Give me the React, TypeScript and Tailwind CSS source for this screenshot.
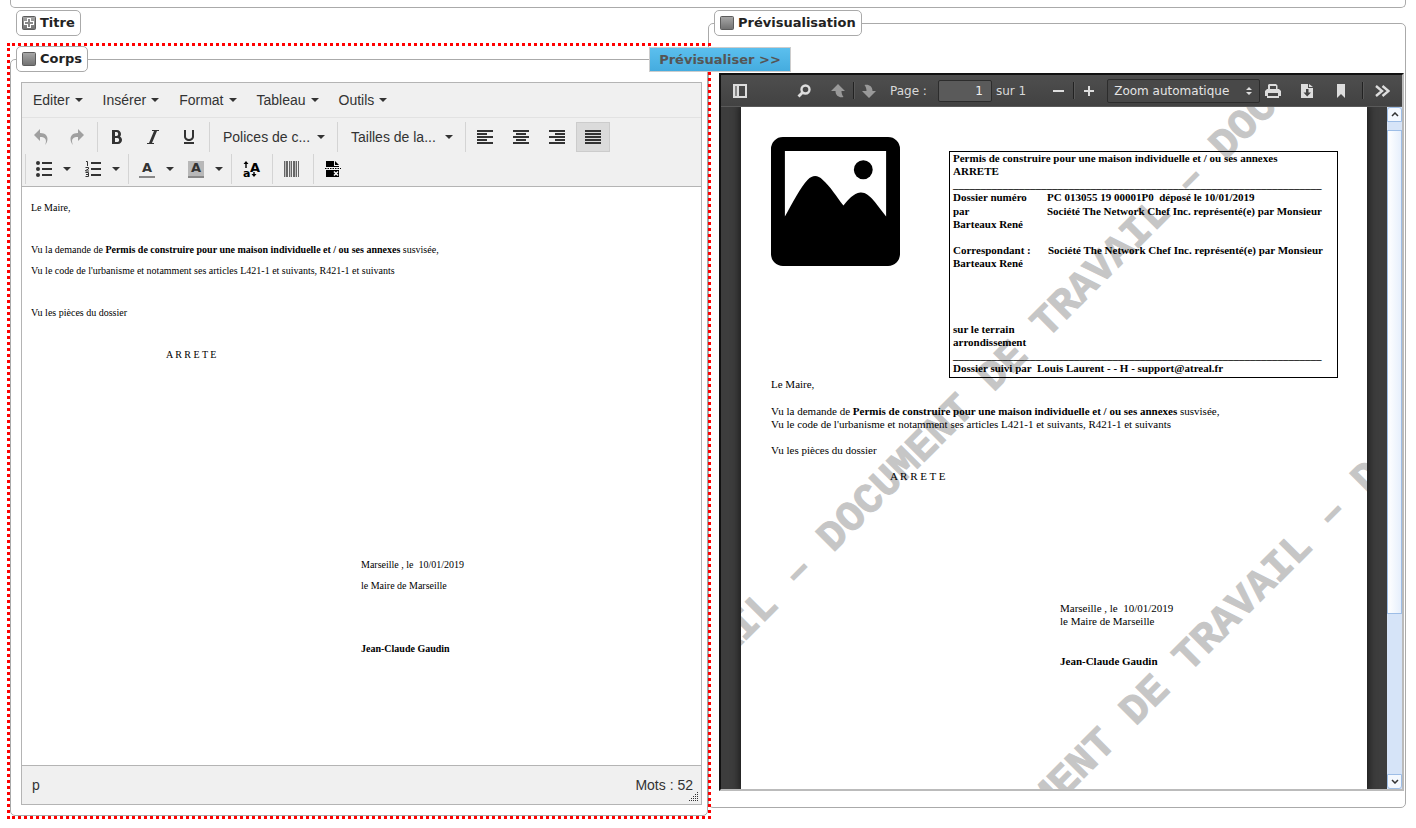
import type { ReactNode } from "react";
import {
  ImBold,
  ImItalic,
  ImUnderline,
  ImUndo2,
  ImRedo2,
  ImParagraphLeft,
  ImParagraphCenter,
  ImParagraphRight,
  ImParagraphJustify,
} from "react-icons/im";

function Toggle({ open, children }: { open: boolean; children: ReactNode }) {
  return (
    <legend className="-ml-[5px] rounded-[5px] border border-[#aaa] bg-white px-[5px]">
      <button type="button" className="flex h-[24px] items-center gap-[4px] font-['DejaVu_Sans',sans-serif] text-[13px] font-bold text-[#222]">
        <svg width="14" height="14" viewBox="0 0 14 14" aria-hidden="true">
          <defs>
            <linearGradient id="tg" x1="0" y1="0" x2="0" y2="1">
              <stop offset="0" stopColor="#a8a8a8" />
              <stop offset="1" stopColor="#707070" />
            </linearGradient>
          </defs>
          <rect x=".5" y=".5" width="13" height="13" rx="1" fill="url(#tg)" stroke="#5c5c5c" />
          {!open && (
            <>
              <path d="M5 2h4v3h3v4H9v3H5V9H2V5h3z" fill="#fff" />
              <path d="M6 3h2v3h3v2H8v3H6V8H3V6h3z" fill="#888" />
            </>
          )}
        </svg>
        {children}
      </button>
    </legend>
  );
}

function Caret() {
  return (
    <svg width="8" height="4" viewBox="0 0 8 4" aria-hidden="true">
      <path d="M0 0h8L4 4z" fill="#333" />
    </svg>
  );
}

function ToolButton({ label, active, children }: { label: string; active?: boolean; children: ReactNode }) {
  return (
    <button
      type="button"
      aria-label={label}
      className={
        active
          ? "flex h-[30px] w-[34px] items-center justify-center border border-[#ccc] bg-[#dbdbdb]"
          : "flex h-[30px] w-[34px] items-center justify-center"
      }
    >
      {children}
    </button>
  );
}

function SplitButton({ label, children }: { label: string; children: ReactNode }) {
  return (
    <button type="button" aria-label={label} className="flex h-[30px] w-[48px] items-center gap-[11px] pl-[8px]">
      {children}
      <Caret />
    </button>
  );
}

const groupStyles = {
  first: "flex gap-[2px]",
  normal: "ml-[3px] flex gap-[2px] border-l border-[#d4d4d4] pl-[2px]",
  split: "ml-[3px] flex gap-px border-l border-[#d4d4d4] pl-[2px]",
  single: "ml-[3px] flex border-l border-[#d4d4d4] pr-px pl-[2px]",
};

function Group({ kind = "normal", children }: { kind?: keyof typeof groupStyles; children: ReactNode }) {
  return <div className={groupStyles[kind]}>{children}</div>;
}

function ListBox({ children }: { children: ReactNode }) {
  return (
    <button type="button" className="flex h-[30px] w-[122px] items-center justify-between pr-[9px] pl-[11px] whitespace-nowrap">
      {children}
      <Caret />
    </button>
  );
}

function Bullets() {
  return (
    <svg width="16" height="16" viewBox="0 0 16 16" fill="#333" aria-hidden="true">
      <circle cx="2" cy="2" r="2" />
      <circle cx="2" cy="8" r="2" />
      <circle cx="2" cy="14" r="2" />
      <path d="M6 1h10v2H6zM6 7h10v2H6zM6 13h10v2H6z" />
    </svg>
  );
}

function Numbers() {
  return (
    <svg width="16" height="16" viewBox="0 0 16 16" aria-hidden="true">
      <path d="M6 1h10v2H6zM6 7h10v2H6zM6 13h10v2H6z" fill="#333" />
      <path d="M1 .5h1.500V5M.5 6.500h3v1.500l-3 1.500v.5h3.500M.5 11.500h3v4h-3M1 13.500h2" stroke="#333" fill="none" />
    </svg>
  );
}

function TextCase() {
  return (
    <svg width="18" height="18" viewBox="0 0 18 18" aria-hidden="true" className="overflow-visible">
      <text x="8" y="12" fontSize="13" fontWeight="bold" fontFamily="DejaVu Sans">A</text>
      <text x="1" y="17" fontSize="11" fontWeight="bold" fontFamily="DejaVu Sans">a</text>
      <path d="M1.500 4L4 1l2.500 3H4.700v4H3.300V4zM9.500 14l2.500 3 2.500-3h-1.800v-2h-1.400v2z" />
    </svg>
  );
}

function Barcode() {
  return (
    <svg width="16" height="16" viewBox="0 0 16 16" fill="#666" aria-hidden="true">
      <path d="M0 0h1v16H0zM2 0h2v16H2zM5 0h1v16H5zM7 0h1v16H7zM9 0h2v16H9zM12 0h1v16h-1zM14 0h1v16h-1z" />
      <path d="M1 0h1v16H1zM6 0h1v16H6zM11 0h1v16h-1z" fill="#bbb" />
    </svg>
  );
}

function PageBreak() {
  return (
    <svg width="16" height="16" viewBox="0 0 16 16" aria-hidden="true">
      <path d="M1 0h8v5h5v1H1zM10 0l4 4h-4zM1 9h13v7H1z" />
      <path d="M0 7.500h16" stroke="#000" strokeDasharray="1.500 1" />
      <path d="M9 10.500l4 4M13 10.500l-4 4" stroke="#fff" strokeWidth="1.500" />
    </svg>
  );
}

function Editor() {
  return (
    <div className="border border-[#b4b4b4] bg-[#f0f0f0] font-['Liberation_Sans',sans-serif] text-[14px] text-[#333]">
      <div className="flex h-[35px] items-center border-b border-[#e2e2e2] pl-[1px]">
        {["Editer", "Insérer", "Format", "Tableau", "Outils"].map((m) => (
          <button key={m} type="button" className="flex items-center gap-[5px] px-[10px] leading-5">
            {m}
            <Caret />
          </button>
        ))}
      </div>
      <div className="flex h-[69px] flex-col gap-[2px] border-b border-[#b4b4b4] py-[4px]">
        <div className="flex pl-[2px]">
          <Group kind="first">
            <ToolButton label="Annuler"><ImUndo2 size={16} color="#a0a0a0" /></ToolButton>
            <ToolButton label="Rétablir"><ImRedo2 size={16} color="#a0a0a0" /></ToolButton>
          </Group>
          <Group>
            <ToolButton label="Gras"><ImBold size={16} /></ToolButton>
            <ToolButton label="Italique"><ImItalic size={16} /></ToolButton>
            <ToolButton label="Souligné"><ImUnderline size={16} /></ToolButton>
          </Group>
          <Group><ListBox>Polices de c...</ListBox></Group>
          <Group><ListBox>Tailles de la...</ListBox></Group>
          <Group>
            <ToolButton label="Aligner à gauche"><ImParagraphLeft size={16} /></ToolButton>
            <ToolButton label="Centrer"><ImParagraphCenter size={16} /></ToolButton>
            <ToolButton label="Aligner à droite"><ImParagraphRight size={16} /></ToolButton>
            <ToolButton label="Justifier" active><ImParagraphJustify size={16} /></ToolButton>
          </Group>
        </div>
        <div className="flex">
          <Group kind="split">
            <SplitButton label="Puces"><Bullets /></SplitButton>
            <SplitButton label="Numérotation"><Numbers /></SplitButton>
          </Group>
          <Group kind="split">
            <SplitButton label="Couleur du texte">
              <span className="flex h-[17px] w-[16px] items-center justify-center border-b-2 border-[#888] font-['DejaVu_Sans',sans-serif] text-[13px] font-bold">A</span>
            </SplitButton>
            <SplitButton label="Couleur d'arrière-plan">
              <span className="flex h-[17px] w-[16px] items-center justify-center border-b-2 border-[#888] bg-[#b8b8b8] font-['DejaVu_Sans',sans-serif] text-[13px] font-bold">A</span>
            </SplitButton>
          </Group>
          <Group kind="single"><ToolButton label="Casse"><TextCase /></ToolButton></Group>
          <Group kind="single"><ToolButton label="Code-barres"><Barcode /></ToolButton></Group>
          <Group kind="single"><ToolButton label="Saut de page"><PageBreak /></ToolButton></Group>
        </div>
      </div>
      <div className="min-h-[578px] bg-white px-[9px] pt-[10px] font-['Liberation_Serif',serif] text-[10px] leading-[21px] text-black">
        <p>Le Maire,</p>
        <p className="mt-[21px]">
          Vu la demande de <b>Permis de construire pour une maison individuelle et / ou ses annexes</b> susvisée,
        </p>
        <p>Vu le code de l'urbanisme et notamment ses articles L421-1 et suivants, R421-1 et suivants</p>
        <p className="mt-[21px]">Vu les pièces du dossier</p>
        <p className="mt-[21px] pl-[135px]">A R R E T E</p>
        <div className="mt-[189px] pl-[330px]">
          <p>Marseille , le &nbsp;10/01/2019</p>
          <p>le Maire de Marseille</p>
          <p className="mt-[42px] font-bold">Jean-Claude Gaudin</p>
        </div>
      </div>
      <div className="relative flex h-[39px] items-center justify-between border-t border-[#b4b4b4] pr-[8px] pl-[10px]">
        <span>p</span>
        <span>Mots : 52</span>
        <svg className="absolute right-[2px] bottom-[2px]" width="10" height="10" viewBox="0 0 10 10" aria-hidden="true">
          <path
            d="M8 0h1v1H8zM6 2h1v1H6zM8 2h1v1H8zM4 4h1v1H4zM6 4h1v1H6zM8 4h1v1H8zM2 6h1v1H2zM4 6h1v1H4zM6 6h1v1H6zM8 6h1v1H8zM0 8h1v1H0zM2 8h1v1H2zM4 8h1v1H4zM6 8h1v1H6zM8 8h1v1H8z"
            fill="#333"
          />
        </svg>
      </div>
    </div>
  );
}

function ViewerButton({ label, wide, children }: { label: string; wide?: boolean; children: ReactNode }) {
  return (
    <button
      type="button"
      aria-label={label}
      className={wide ? "flex h-[24px] w-[30px] shrink-0 items-center justify-center" : "flex h-[24px] w-[26px] shrink-0 items-center justify-center"}
    >
      <svg width="16" height="16" viewBox="0 0 16 16" fill="#ddd" aria-hidden="true">
        {children}
      </svg>
    </button>
  );
}

function Divider() {
  return <span className="h-[17px] w-px shrink-0 bg-[#222] shadow-[1px_0_0_#585858]" />;
}

function ViewerToolbar() {
  return (
    <div className="relative z-10 flex h-[32px] items-center border-b border-[#5a5a5a] bg-linear-to-b from-[#4e4e4e] to-[#424242] font-['DejaVu_Sans',sans-serif] text-[12px] text-[#d9d9d9]">
      <div className="flex w-[68px] pl-[4px]">
        <ViewerButton label="Panneau latéral" wide>
          <path d="M1 1h14v14H1zM3 3v10h2V3zM7 3v10h6V3z" fillRule="evenodd" />
          <path d="M3 3h2v10H3z" fill="#888" />
        </ViewerButton>
      </div>
      <ViewerButton label="Rechercher" wide>
        <circle cx="9.500" cy="6.500" r="4" fill="none" stroke="#ddd" strokeWidth="2.400" />
        <path d="M6.500 9.500l-4 4" stroke="#ddd" strokeWidth="2.800" />
      </ViewerButton>
      <div className="ml-[4px] flex items-center">
        <ViewerButton label="Page précédente" wide>
          <path d="M8 1l7 7h-3.500c0 2 .5 4 2 6-4 1-8-1-8-6H1z" fill="#999" />
        </ViewerButton>
        <Divider />
        <ViewerButton label="Page suivante" wide>
          <path d="M8 15l7-7h-3.500c0-5-4-7-8-6 1.500 2 2 4 2 6H1z" fill="#999" />
        </ViewerButton>
      </div>
      <label htmlFor="page" className="ml-[6px] shrink-0">Page :</label>
      <input
        id="page"
        defaultValue="1"
        className="ml-[11px] h-[22px] w-[54px] shrink-0 rounded-[2px] border border-[#2c2c2c] bg-[#5a5a5a] pr-[8px] text-right text-[#f0f0f0]"
      />
      <span className="ml-[4px] shrink-0">sur 1</span>
      <div className="ml-[17px] flex items-center">
        <ViewerButton label="Zoom arrière" wide>
          <path d="M3 7h11v2H3z" />
        </ViewerButton>
        <Divider />
        <ViewerButton label="Zoom avant" wide>
          <path d="M3 7h4V3h2v4h4v2H9v4H7V9H3z" />
        </ViewerButton>
      </div>
      <div className="relative ml-[3px] shrink-0">
        <select
          aria-label="Zoom"
          className="block h-[24px] w-[153px] appearance-none rounded-[2px] border border-[#2c2c2c] bg-[#484848] pl-[6px] text-[12px] text-[#e4e4e4]"
        >
          <option>Zoom automatique</option>
        </select>
        <svg className="pointer-events-none absolute top-[8px] right-[8px]" width="6" height="8" viewBox="0 0 6 8" fill="#ddd" aria-hidden="true">
          <path d="M0 3l3-3 3 3zM0 5h6L3 8z" />
        </svg>
      </div>
      <div className="flex items-center gap-[8px]">
        <ViewerButton label="Imprimer">
          <path d="M4 1h7l1.500 1.500V6H14l2 2v5h-2v2H2v-2H0V8l2-2h1V2zM5 3v3h6V3zM3 10v3h10v-3z" fillRule="evenodd" />
        </ViewerButton>
        <ViewerButton label="Télécharger">
          <path d="M2 1h7v4h5v10H2zM10 1l4 3h-4z" />
          <path d="M7 6h2.500v3.500H12L8.200 13.500 4.500 9.500H7z" fill="#444" />
        </ViewerButton>
        <ViewerButton label="Signet">
          <path d="M4 1h8v14l-4-4-4 4z" />
        </ViewerButton>
        <div className="flex items-center gap-[6px]">
          <Divider />
          <ViewerButton label="Outils">
            <path d="M2 3l6 5-6 5M8.500 3l6 5-6 5" fill="none" stroke="#ddd" strokeWidth="2.400" />
          </ViewerButton>
        </div>
      </div>
    </div>
  );
}

const rule = "_".repeat(67);

function Watermark() {
  const line = "DOCUMENT DE TRAVAIL – DOCUMENT DE TRAVAIL – DOCUMENT DE TRAVAIL – ";
  return (
    <svg
      className="absolute top-0 left-0"
      width="626"
      height="682"
      viewBox="0 0 626 682"
      fill="#c6c6c6"
      stroke="#c6c6c6"
      strokeWidth="1"
      fontFamily="Liberation Mono, monospace"
      fontWeight="bold"
      fontSize="42"
      aria-hidden="true"
    >
      <text transform="translate(-300 838) rotate(-45)" xmlSpace="preserve">{line}</text>
      <text transform="translate(-158 1172) rotate(-45)" xmlSpace="preserve">{line}</text>
    </svg>
  );
}

function PdfPage() {
  return (
    <div className="relative mx-[20px] h-[682px] flex-1 overflow-hidden bg-white font-['Liberation_Serif',serif] text-[11px] leading-[13px] text-black shadow-[0_0_7px_2px_#1c1c1c]">
      <Watermark />
      <div className="relative pt-[30px] pl-[30px]">
        <div className="flex items-start">
          <svg width="129" height="129" viewBox="0 0 130 130" role="img" aria-label="Logo">
            <path
              fillRule="evenodd"
              d="M12 0h106a12 12 0 0 1 12 12v106a12 12 0 0 1-12 12H12a12 12 0 0 1-12-12V12A12 12 0 0 1 12 0zM14 14v66C22 66 30 50 37 43 42 38 47 38 52 43 60 50 66 60 73 69 78 63 83 57 90 56 99 55 107 69 116 80V14z"
            />
            <circle cx="93" cy="33" r="9.500" />
          </svg>
          <div className="mt-[14px] ml-[49px] h-[227px] w-[389px] border border-black pl-[3px] font-bold whitespace-pre">
            <p>Permis de construire pour une maison individuelle et / ou ses annexes</p>
            <p>ARRETE</p>
            <p>{rule}</p>
            <div className="grid grid-cols-[94px_1fr] gap-y-px">
              <span>Dossier numéro</span>
              <span>PC 013055 19 00001P0  déposé le 10/01/2019</span>
              <span>par</span>
              <span>Société The Network Chef Inc. représenté(e) par Monsieur</span>
            </div>
            <p>Barteaux René</p>
            <div className="mt-[13px] grid grid-cols-[95px_1fr]">
              <span>Correspondant :</span>
              <span>Société The Network Chef Inc. représenté(e) par Monsieur</span>
            </div>
            <p>Barteaux René</p>
            <p className="mt-[53px]">sur le terrain</p>
            <p>arrondissement</p>
            <p>{rule}</p>
            <p>Dossier suivi par  Louis Laurent - - H - support@atreal.fr</p>
          </div>
        </div>
        <p>Le Maire,</p>
        <p className="mt-[14px]">
          Vu la demande de <b>Permis de construire pour une maison individuelle et / ou ses annexes</b> susvisée,
        </p>
        <p>Vu le code de l'urbanisme et notamment ses articles L421-1 et suivants, R421-1 et suivants</p>
        <p className="mt-[13px]">Vu les pièces du dossier</p>
        <p className="mt-[13px] pl-[119px]">A R R E T E</p>
        <div className="mt-[119px] pl-[289px]">
          <p>Marseille , le &nbsp;10/01/2019</p>
          <p>le Maire de Marseille</p>
          <p className="mt-[27px] font-bold">Jean-Claude Gaudin</p>
        </div>
      </div>
    </div>
  );
}

function ScrollBar() {
  return (
    <div className="flex w-[15px] shrink-0 flex-col bg-[#d6e4f8]">
      <button type="button" aria-label="Défiler vers le haut" className="flex h-[15px] items-center justify-center rounded-t-[3px] border border-[#9dbde6] bg-[#f4f8fe]">
        <svg width="8" height="5" viewBox="0 0 8 5" aria-hidden="true"><path d="M1 4l3-3 3 3" fill="none" stroke="#333" strokeWidth="1.500" /></svg>
      </button>
      <div className="mt-[8px] h-[484px] border border-[#9dbde6] bg-linear-to-r from-white to-[#e6effc]" />
      <button type="button" aria-label="Défiler vers le bas" className="mt-auto flex h-[15px] items-center justify-center rounded-b-[3px] border border-[#9dbde6] bg-[#f4f8fe]">
        <svg width="8" height="5" viewBox="0 0 8 5" aria-hidden="true"><path d="M1 1l3 3 3-3" fill="none" stroke="#333" strokeWidth="1.500" /></svg>
      </button>
    </div>
  );
}

export default function App() {
  return (
    <main className="overflow-hidden bg-white px-[10px] pb-[9px]">
      <div className="h-[8px] rounded-b-[5px] border border-t-0 border-[#aaa]" />
      <div className="mt-[2px] grid grid-cols-2 items-start">
        <div className="relative z-10">
          <fieldset className="pl-[11px]">
            <Toggle open={false}>Titre</Toggle>
          </fieldset>
          <section className="relative mt-[10px] outline-3 outline-[#f00] outline-dotted">
            <fieldset className="min-w-0 rounded-[5px] border border-[#aaa] pr-[5px] pb-[10px] pl-[10px]">
              <Toggle open>Corps</Toggle>
              <div className="mt-[10px]">
                <Editor />
              </div>
            </fieldset>
            <button
              type="button"
              className="absolute top-px -right-[83px] h-[25px] w-[142px] border border-[#ccc] bg-linear-to-b from-[#5bbfee] to-[#45acdf] font-['DejaVu_Sans',sans-serif] text-[13px] font-bold whitespace-nowrap text-[#555]"
            >
              Prévisualiser &gt;&gt;
            </button>
          </section>
        </div>
        <fieldset className="min-w-0 rounded-[5px] border border-[#aaa] pr-px pb-[16px] pl-[10px]">
          <Toggle open>Prévisualisation</Toggle>
          <div className="mt-[37px] border-2 border-t-[#111] border-r-[#bbb] border-b-[#bbb] border-l-[#111] bg-[#3d3d3d]">
            <ViewerToolbar />
            <div className="flex overflow-hidden">
              <PdfPage />
              <ScrollBar />
            </div>
          </div>
        </fieldset>
      </div>
    </main>
  );
}
